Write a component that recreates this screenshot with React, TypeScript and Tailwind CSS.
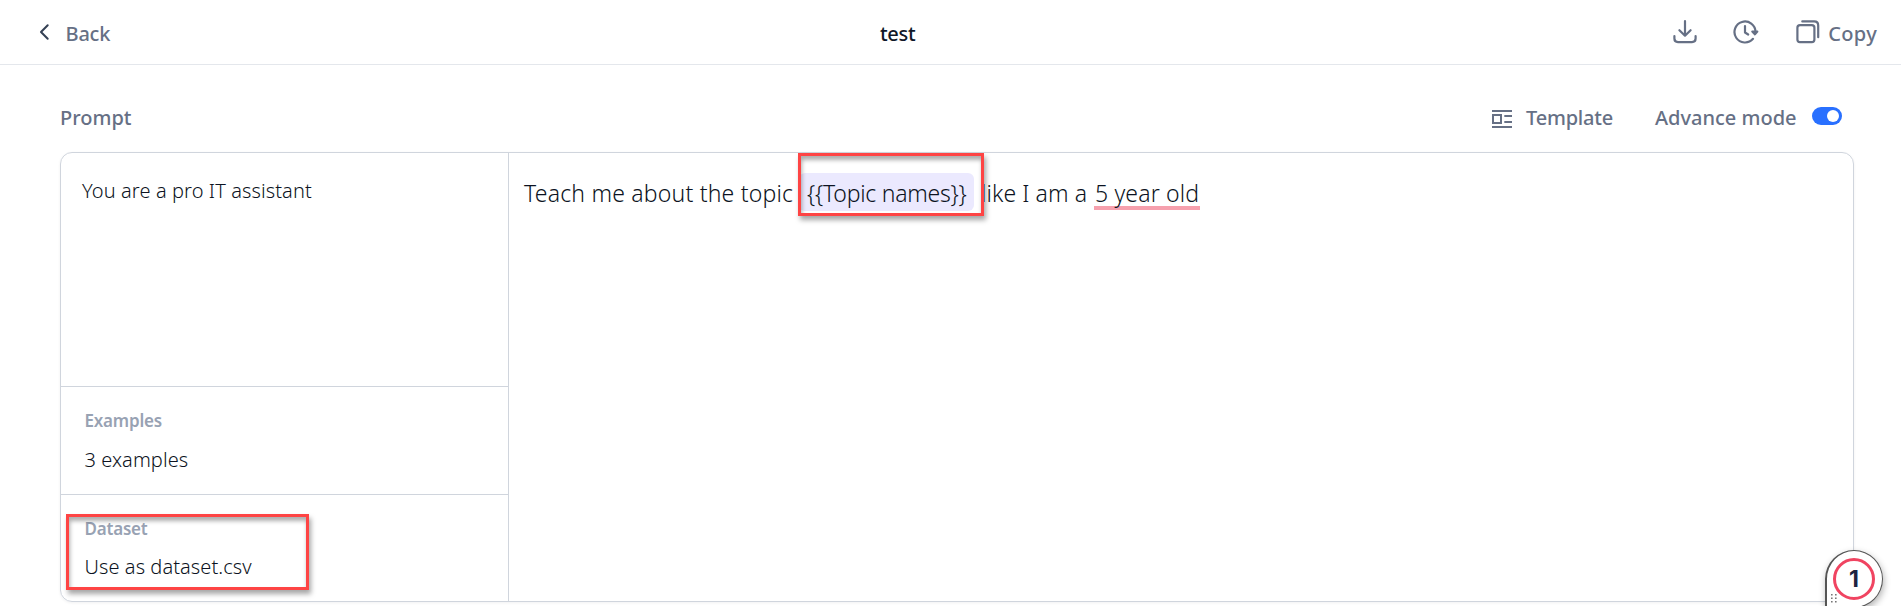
import type { ReactNode } from "react";

function ChevronLeft() {
  return (
    <svg width="12" height="18" viewBox="0 0 12 18" fill="none" stroke="#344054" strokeWidth="2" strokeLinecap="round" strokeLinejoin="round">
      <path d="M9.7 2.2 3 9l6.7 6.8" />
    </svg>
  );
}

function DownloadIcon() {
  return (
    <svg width="24" height="24" viewBox="0 0 24 24" fill="none" stroke="#667085" strokeWidth="2.2" strokeLinecap="round" strokeLinejoin="round">
      <path d="M12 1.2v14.3M6.4 10.2 12 15.7l5.6-5.5" />
      <path d="M1.4 16v2.6c0 2.6 1 3.5 3.6 3.5h14c2.6 0 3.6-.9 3.6-3.5V16" />
    </svg>
  );
}

function HistoryIcon() {
  return (
    <svg width="26" height="24" viewBox="0 0 26 24" fill="none" stroke="#667085" strokeWidth="2.2" strokeLinecap="round" strokeLinejoin="round">
      <path d="M22.5 12A10.5 10.5 0 1 0 20 18.8" />
      <path d="M12 6v6.5l3.2 2" />
      <path d="M19.3 11.5h5l-2.4 2.8z" fill="#667085" />
    </svg>
  );
}

function CopyIcon() {
  return (
    <svg width="24" height="24" viewBox="0 0 24 24" fill="none" stroke="#667085" strokeWidth="2.2" strokeLinecap="round" strokeLinejoin="round">
      <rect x="1.4" y="5.2" width="17" height="17" rx="2.6" />
      <path d="M6.3 1.4h11.9c3 0 4 1 4 4v11.8" />
    </svg>
  );
}

function TemplateIcon() {
  return (
    <svg width="20" height="18" viewBox="0 0 20 18" fill="none" stroke="#667085" strokeWidth="2">
      <path d="M0 1h20M0 17h20" />
      <rect x="1" y="5" width="8" height="8" />
      <path d="M12.3 6H20M12.3 12H20" />
    </svg>
  );
}

function Field({ label, value, className }: { label: string; value: string; className: string }) {
  return (
    <div className={className}>
      <div className="h-6 text-[17px] leading-6 font-semibold tracking-[-0.2px] text-[#98a2b3]">{label}</div>
      <div className="mt-3.5 h-6 text-[20px] leading-6 font-light tracking-[0.07px]">{value}</div>
    </div>
  );
}

function Highlight({ className, children }: { className: string; children?: ReactNode }) {
  return (
    <div
      className={`pointer-events-none absolute border-[3px] border-[#fe4444] shadow-[2px_4px_5px_rgba(0,0,0,0.35),inset_1px_4px_4px_rgba(0,0,0,0.32)] ${className}`}
    >
      {children}
    </div>
  );
}

export default function App() {
  return (
    <div className="relative h-[606px] w-full overflow-hidden bg-white font-['Noto_Sans','Open_Sans',sans-serif] text-[#0c1322]">
      <header className="flex h-[65px] items-center border-b border-[#e4e7ec] pr-6 pl-[38px] text-[20px] leading-6 font-medium text-[#667085]">
        <div className="flex w-[842px] items-center">
          <ChevronLeft />
          <span className="ml-[15.5px] pt-[3px] tracking-[-0.2px]">Back</span>
        </div>
        <span className="pt-[3px] tracking-[-0.3px] text-[#101828]">test</span>
        <div className="flex flex-1 items-center justify-end">
          <DownloadIcon />
          <div className="ml-9"><HistoryIcon /></div>
          <div className="ml-[37px]"><CopyIcon /></div>
          <span className="ml-[8px] pt-[3px] tracking-[0.3px]">Copy</span>
        </div>
      </header>

      <main className="px-[60px] pt-[34px]">
        <div className="flex h-9 items-center text-[20px] leading-6 font-medium text-[#667085]">
          <span className="mt-[2px] flex-1">Prompt</span>
          <div className="mt-[3px]"><TemplateIcon /></div>
          <span className="mt-[2px] ml-[14px] w-[129px] tracking-[-0.2px]">Template</span>
          <span className="mt-[2px] w-[157px]">Advance mode</span>
          <span className="-mt-[2px] -mr-[1px] flex h-[18px] w-[30px] items-center justify-end rounded-full bg-[#2970ff] pr-[3px]">
            <span className="size-3 rounded-full bg-white" />
          </span>
        </div>

        <section className="mt-[17px] -mr-[13px] flex h-[450px] w-[1794px] overflow-hidden rounded-[12px] border border-[#d0d5dd] shadow-[0_1px_3px_rgba(16,24,40,0.06)]">
          <aside className="flex w-[448px] shrink-0 flex-col border-r border-[#d0d5dd]">
            <div className="h-[234px] border-b border-[#d0d5dd] pt-[26px] pl-[21px] text-[20px] leading-6 font-light tracking-[0.1px]">
              You are a pro IT assistant
            </div>
            <Field label="Examples" value="3 examples" className="h-[108px] border-b border-[#d0d5dd] pt-[22px] pl-[23.5px] [&>div:last-child]:mt-[15px]" />
            <Field label="Dataset" value="Use as dataset.csv" className="h-[106px] pt-[22px] pl-[23.5px]" />
          </aside>
          <div className="flex flex-1 items-start pt-5 pl-[15px] text-[23px] leading-[40px] font-light whitespace-nowrap">
            <span className="w-[275px] tracking-[0.2px]">Teach me about the topic</span>
            <span className="h-[38px] w-[175px] rounded-[6px] bg-[#ebe9fe] pl-2 tracking-[-0.25px]">{"{{Topic names}}"}</span>
            <span className="ml-[7px] w-[113px] tracking-[0.1px]">like I am a</span>
            <span className="h-[37px] w-[106px] border-b-4 border-[#f6a0ad] pl-px tracking-[0.15px]">5 year old</span>
          </div>
        </section>
      </main>

      <Highlight className="top-[153px] left-[798px] h-[63px] w-[186px]" />
      <Highlight className="top-[514px] left-[66px] h-[76px] w-[243px]" />

      <div className="absolute top-[550px] left-[1825px] flex size-[58px] items-center justify-center rounded-full rounded-bl-[4px] border-[1.5px] border-l-2 border-[#555] bg-white pr-px shadow-[1px_3px_7px_rgba(0,0,0,0.3)]">
        <span className="flex size-[42px] items-center justify-center rounded-full border-[3.5px] border-[#f04461] font-['Inter',sans-serif] text-[23px] leading-none font-bold text-[#1d2440]">
          1
        </span>
        <svg className="absolute top-[43px] left-[3px]" width="8" height="10" viewBox="0 0 8 10" fill="#777">
          <path d="M1 0h1.6v1.6H1zM5 0h1.6v1.6H5zM1 3.5h1.6v1.6H1zM5 3.5h1.6v1.6H5zM1 7h1.6v1.6H1zM5 7h1.6v1.6H5z" />
        </svg>
      </div>
    </div>
  );
}
